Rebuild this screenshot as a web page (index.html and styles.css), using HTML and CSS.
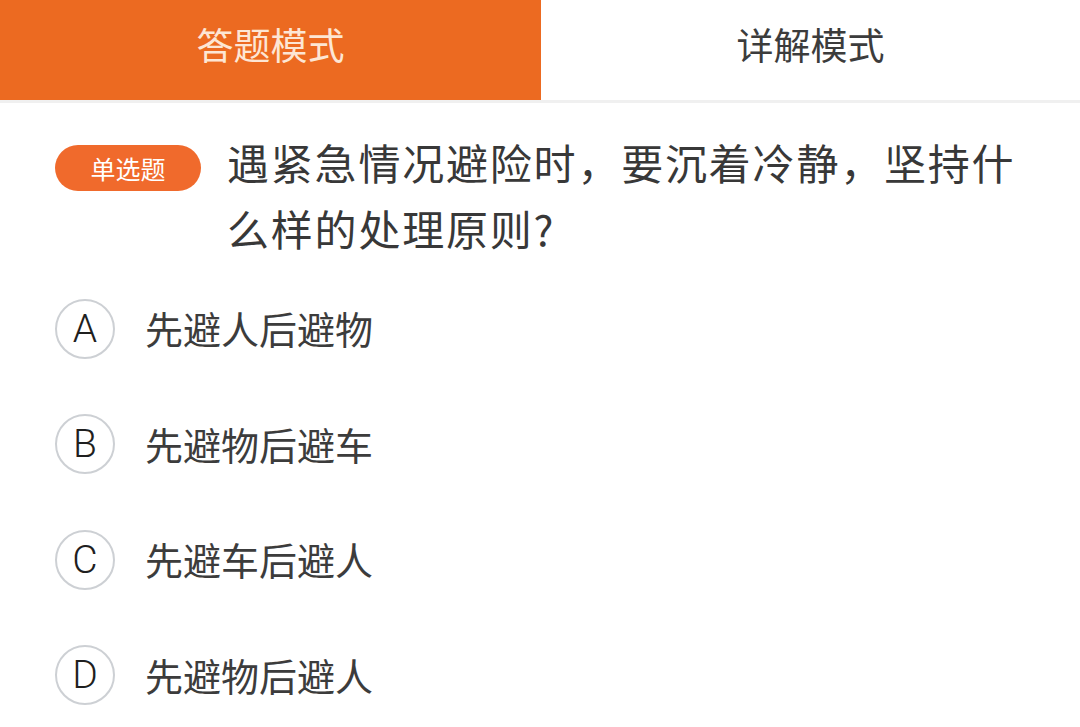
FILE: index.html
```html
<!DOCTYPE html>
<html lang="zh">
<head>
<meta charset="utf-8">
<link rel="stylesheet" href="styles.css">
</head>
<body>
<div class="tabs">
  <div class="tab active">答题模式</div>
  <div class="tab">详解模式</div>
</div>
<div class="question">
  <span class="badge">单选题</span>
  <p class="qtext">遇紧急情况避险时，要沉着冷静，坚持什么样的处理原则?</p>
</div>
<ul class="options">
  <li class="option"><span class="letter">A</span><span class="otext">先避人后避物</span></li>
  <li class="option"><span class="letter">B</span><span class="otext">先避物后避车</span></li>
  <li class="option"><span class="letter">C</span><span class="otext">先避车后避人</span></li>
  <li class="option"><span class="letter">D</span><span class="otext">先避物后避人</span></li>
</ul>
</body>
</html>
```
FILE: styles.css
```css
* { box-sizing: border-box; }
html, body {
  margin: 0;
  padding: 0;
  background: #fff;
  font-family: "Noto Sans CJK SC", "Noto Sans", sans-serif;
  color: #333;
}
.tabs {
  display: flex;
  height: 103px;
  border-bottom: 3px solid #f0f0f0;
}
.tab {
  flex: 0 0 541px;
  display: flex;
  align-items: center;
  justify-content: center;
  font-size: 37px;
  color: #3c3c3c;
  padding-bottom: 12px;
}
.tab + .tab { flex: 1; }
.tab.active {
  background: #ec6a21;
  color: #fde6d4;
}
.question {
  display: flex;
  align-items: flex-start;
  margin-top: 26px;
  padding-left: 55px;
}
.badge {
  flex: none;
  margin-top: 16px;
  width: 146px;
  height: 46px;
  border-radius: 23px;
  background: #f06a2c;
  color: #fff;
  font-size: 25px;
  display: flex;
  align-items: center;
  justify-content: center;
}
.qtext {
  margin: 0 0 0 26px;
  width: 820px;
  font-size: 42px;
  letter-spacing: 1.8px;
  line-height: 66px;
  color: #383838;
}
.options {
  list-style: none;
  margin: 10px 0 0;
  padding: 0 0 0 55px;
}
.option {
  height: 115.5px;
  display: flex;
  align-items: center;
}
.letter {
  flex: none;
  width: 60px;
  height: 60px;
  border: 2px solid #cdd0d4;
  border-radius: 50%;
  display: flex;
  align-items: center;
  justify-content: center;
  font-family: "Roboto", "Noto Sans", sans-serif;
  font-weight: 300;
  font-size: 39px;
  color: #1f1f1f;
}
.otext {
  margin-left: 30px;
  margin-bottom: 2px;
  font-size: 38px;
  color: #3c3c3c;
}
```
